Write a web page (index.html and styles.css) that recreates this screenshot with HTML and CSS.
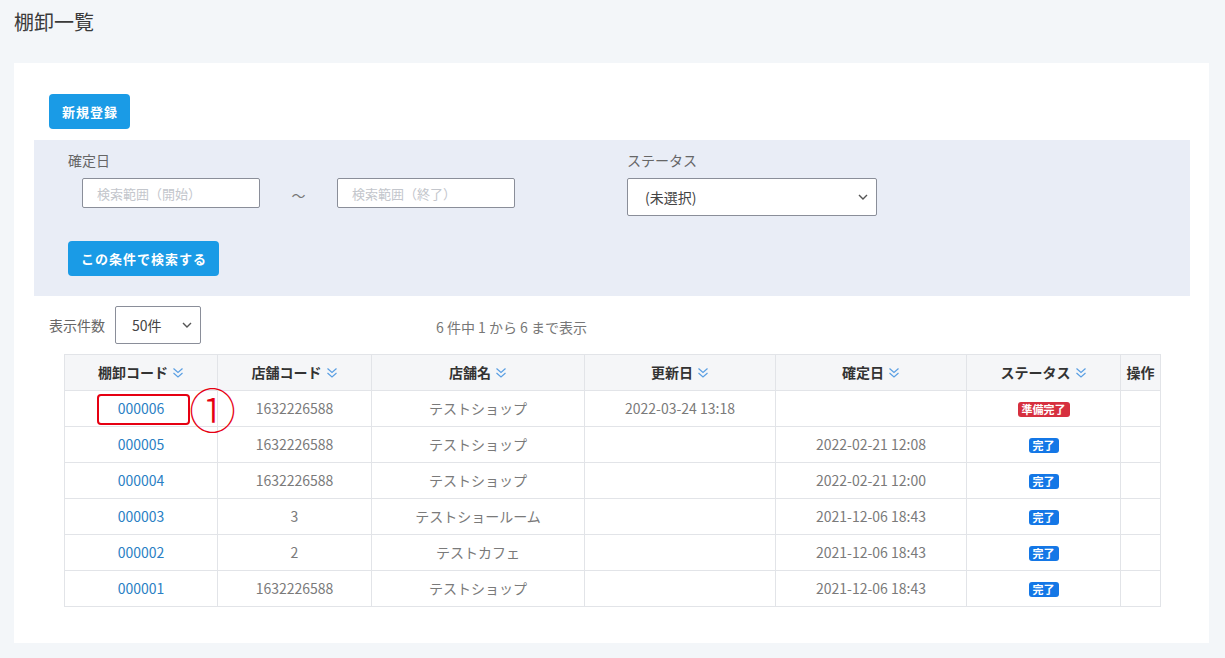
FILE: index.html
```html
<!DOCTYPE html>
<html lang="ja">
<head>
<meta charset="utf-8">
<title>棚卸一覧</title>
<link rel="stylesheet" href="styles.css">
</head>
<body>
<h1 class="page-title">棚卸一覧</h1>
<div class="card">
  <div class="top-actions"><button class="btn">新規登録</button></div>
  <div class="search-panel">
    <div class="search-row">
      <div class="field-date">
        <div class="label">確定日</div>
        <div class="range">
          <input class="text-input" placeholder="検索範囲（開始）">
          <span class="tilde">～</span>
          <input class="text-input" placeholder="検索範囲（終了）">
        </div>
      </div>
      <div class="field-status">
        <div class="label">ステータス</div>
        <div class="select status-select"><span>(未選択)</span><svg class="caret" viewBox="0 0 10 6" width="10" height="6"><path d="M1 1l4 4 4-4" fill="none" stroke="#555" stroke-width="1.4"/></svg></div>
      </div>
    </div>
    <div class="search-btn-row"><button class="btn">この条件で検索する</button></div>
  </div>
  <div class="list-controls">
    <span class="per-label">表示件数</span>
    <div class="select per-select"><span>50件</span><svg class="caret" viewBox="0 0 10 6" width="10" height="6"><path d="M1 1l4 4 4-4" fill="none" stroke="#555" stroke-width="1.4"/></svg></div>
    <span class="info">6 件中 1 から 6 まで表示</span>
  </div>
  <table class="list">
    <colgroup>
      <col style="width:153px"><col style="width:154px"><col style="width:213px"><col style="width:191px"><col style="width:191px"><col style="width:154px"><col style="width:40px">
    </colgroup>
    <thead>
      <tr>
        <th>棚卸コード<svg class="sort" viewBox="0 0 12 12" width="12" height="12"><path d="M1.5 1.5l4.5 4 4.5-4M1.5 6l4.5 4 4.5-4" fill="none" stroke="#5a9fe3" stroke-width="1.2"/></svg></th>
        <th>店舗コード<svg class="sort" viewBox="0 0 12 12" width="12" height="12"><path d="M1.5 1.5l4.5 4 4.5-4M1.5 6l4.5 4 4.5-4" fill="none" stroke="#5a9fe3" stroke-width="1.2"/></svg></th>
        <th>店舗名<svg class="sort" viewBox="0 0 12 12" width="12" height="12"><path d="M1.5 1.5l4.5 4 4.5-4M1.5 6l4.5 4 4.5-4" fill="none" stroke="#5a9fe3" stroke-width="1.2"/></svg></th>
        <th>更新日<svg class="sort" viewBox="0 0 12 12" width="12" height="12"><path d="M1.5 1.5l4.5 4 4.5-4M1.5 6l4.5 4 4.5-4" fill="none" stroke="#5a9fe3" stroke-width="1.2"/></svg></th>
        <th>確定日<svg class="sort" viewBox="0 0 12 12" width="12" height="12"><path d="M1.5 1.5l4.5 4 4.5-4M1.5 6l4.5 4 4.5-4" fill="none" stroke="#5a9fe3" stroke-width="1.2"/></svg></th>
        <th>ステータス<svg class="sort" viewBox="0 0 12 12" width="12" height="12"><path d="M1.5 1.5l4.5 4 4.5-4M1.5 6l4.5 4 4.5-4" fill="none" stroke="#5a9fe3" stroke-width="1.2"/></svg></th>
        <th>操作</th>
      </tr>
    </thead>
    <tbody>
      <tr>
        <td class="code-cell"><a class="link" href="#">000006</a><span class="mark-box"></span><span class="mark-num">①</span></td>
        <td>1632226588</td><td>テストショップ</td><td>2022-03-24 13:18</td><td></td>
        <td><span class="badge badge-red">準備完了</span></td><td></td>
      </tr>
      <tr>
        <td><a class="link" href="#">000005</a></td>
        <td>1632226588</td><td>テストショップ</td><td></td><td>2022-02-21 12:08</td>
        <td><span class="badge badge-blue">完了</span></td><td></td>
      </tr>
      <tr>
        <td><a class="link" href="#">000004</a></td>
        <td>1632226588</td><td>テストショップ</td><td></td><td>2022-02-21 12:00</td>
        <td><span class="badge badge-blue">完了</span></td><td></td>
      </tr>
      <tr>
        <td><a class="link" href="#">000003</a></td>
        <td>3</td><td>テストショールーム</td><td></td><td>2021-12-06 18:43</td>
        <td><span class="badge badge-blue">完了</span></td><td></td>
      </tr>
      <tr>
        <td><a class="link" href="#">000002</a></td>
        <td>2</td><td>テストカフェ</td><td></td><td>2021-12-06 18:43</td>
        <td><span class="badge badge-blue">完了</span></td><td></td>
      </tr>
      <tr>
        <td><a class="link" href="#">000001</a></td>
        <td>1632226588</td><td>テストショップ</td><td></td><td>2021-12-06 18:43</td>
        <td><span class="badge badge-blue">完了</span></td><td></td>
      </tr>
    </tbody>
  </table>
</div>
</body>
</html>
```
FILE: styles.css
```css
* { box-sizing: border-box; }
html, body { margin: 0; padding: 0; }
body {
  background: #f3f6f9;
  font-family: "Noto Sans CJK JP", "Noto Sans", sans-serif;
  color: #555;
  width: 1225px;
  height: 658px;
  overflow: hidden;
}
.page-title {
  margin: 0;
  padding: 8px 0 0 14px;
  height: 63px;
  font-size: 20px;
  font-weight: 400;
  color: #3a3a3a;
  line-height: 28px;
}
.card {
  background: #fff;
  margin: 0 16px 0 14px;
  padding: 31px 19px 36px 20px;
  height: 580px;
}
.top-actions { padding-left: 15px; }
.btn {
  background: #1a9be6;
  color: #fff;
  border: none;
  border-radius: 4px;
  font-family: "Noto Sans CJK JP", sans-serif;
  font-weight: 700;
  font-size: 13px;
  letter-spacing: 1px;
  height: 35px;
  padding: 0 12px 0 13px;
  line-height: 35px;
}
.search-panel {
  margin-top: 11px;
  background: #e9edf6;
  padding: 10px 0 20px 34px;
  height: 156px;
}
.search-row { display: flex; }
.label { font-size: 14px; color: #666; line-height: 20px; }
.field-date { width: 559px; }
.range { display: flex; align-items: center; margin-top: 8px; padding-left: 14px; }
.text-input {
  width: 178px;
  height: 30px;
  border: 1px solid #8a8e99;
  border-radius: 2px;
  background: #fff;
  padding: 0 14px;
  font-family: "Noto Sans CJK JP", sans-serif;
  font-size: 13px;
}
.text-input::placeholder { color: #c3c6cc; }
.tilde { width: 77px; text-align: center; color: #777; font-size: 14px; padding-top: 4px; }
.field-status { width: 250px; }
.select {
  display: flex;
  align-items: center;
  justify-content: space-between;
  background: #fff;
  border: 1px solid #8a8e99;
  border-radius: 2px;
  height: 38px;
  font-size: 14px;
  color: #444;
}
.status-select { margin-top: 8px; padding: 0 8px 0 17px; }
.caret { display: block; }
.search-btn-row { margin-top: 25px; }
.list-controls {
  display: flex;
  align-items: center;
  padding: 10px 0 10px 15px;
  height: 58px;
}
.per-label { font-size: 14px; color: #666; }
.per-select { width: 86px; margin-left: 10px; padding: 0 8px 0 16px; }
.info { margin-left: 235px; font-size: 14px; color: #777; margin-top: 4px; }
.list {
  margin: 0 0 0 30px;
  border-collapse: collapse;
  table-layout: fixed;
  width: 1096px;
  font-size: 14px;
}
.list th, .list td {
  border: 1px solid #e2e4e8;
  height: 36px;
  text-align: center;
  padding: 0;
  vertical-align: middle;
}
.list th {
  background: #f5f6f8;
  color: #333;
  font-weight: 700;
  padding-bottom: 2px;
}
.list td { color: #7a7a7a; padding-bottom: 2px; }
.sort { vertical-align: -1px; margin-left: 4px; }
.link { color: #2a7fc4; text-decoration: none; }
.code-cell { position: relative; }
.mark-box {
  position: absolute;
  left: 32px;
  top: 3px;
  width: 93px;
  height: 31px;
  border: 2px solid #e60012;
  border-radius: 4px;
}
.mark-num {
  position: absolute;
  left: 124px;
  top: -7px;
  font-size: 47px;
  line-height: 48px;
  font-weight: 300;
  color: #e60012;
  font-family: "Noto Sans CJK JP", sans-serif;
}
.badge {
  display: inline-block;
  color: #fff;
  font-weight: 700;
  font-size: 11px;
  line-height: 15px;
  height: 15px;
  padding: 0 4px;
  border-radius: 3px;
  vertical-align: middle;
}
.badge-red { background: #d6303f; }
.badge-blue { background: #1477e6; }
```
